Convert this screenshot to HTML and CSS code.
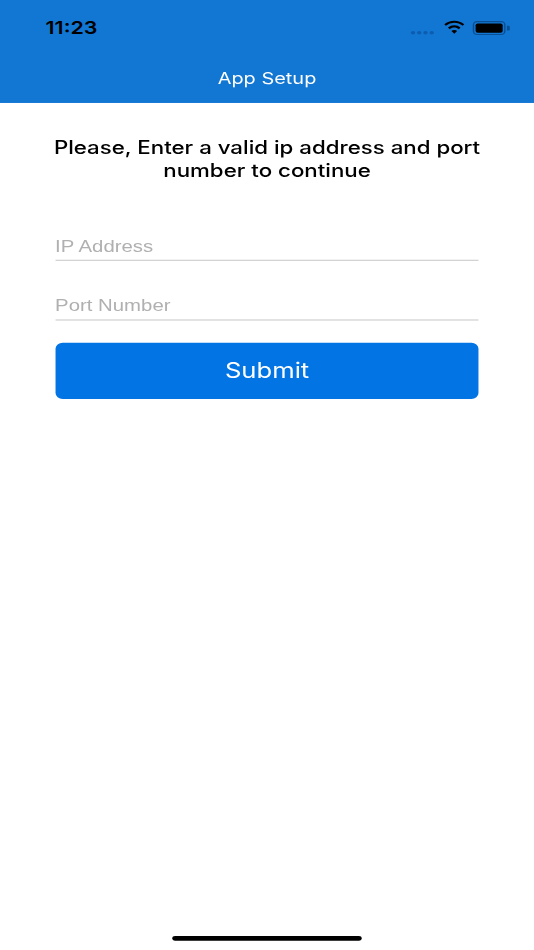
FILE: index.html
```html
<!DOCTYPE html>
<html lang="en">
<head>
<meta charset="utf-8">
<title>App Setup</title>
<link rel="stylesheet" href="styles.css">
</head>
<body>
<div class="screen">
  <header class="navbar">
    <div class="status">
      <span class="time">11:23</span>
      <div class="indicators">
        <svg class="signal" viewBox="0 0 17 4" aria-hidden="true"><g fill="#0d5cad"><circle cx="2" cy="2" r="1.5"/><circle cx="6.4" cy="2" r="1.5"/><circle cx="10.8" cy="2" r="1.5"/><circle cx="15.2" cy="2" r="1.5"/></g></svg>
        <svg class="wifi" viewBox="0 0 16 12" preserveAspectRatio="none" aria-hidden="true"><path fill="#000" d="M8 2.3c2.2 0 4.3.9 5.9 2.4l1.1-1.2A10 10 0 0 0 8 .6 10 10 0 0 0 1 3.5l1.1 1.2A8.500 8.500 0 0 1 8 2.300zM8 6c1.200 0 2.300.5 3.200 1.300l1.200-1.200A6.400 6.400 0 0 0 8 4.300a6.400 6.400 0 0 0-4.400 1.800l1.200 1.200C5.700 6.500 6.800 6 8 6zM8 7.900c-.8 0-1.500.3-2 .8L8 11l2-2.300c-.5-.5-1.200-.8-2-.8z"/></svg>
        <div class="battery"><div class="battery-fill"></div></div>
        <div class="battery-cap"></div>
      </div>
    </div>
    <div class="title-bar"><span class="title">App Setup</span></div>
  </header>
  <main class="content">
    <h1 class="prompt">Please, Enter a valid ip address and port number to continue</h1>
    <form class="form">
      <div class="field first"><span class="placeholder">IP Address</span></div>
      <div class="field"><span class="placeholder">Port Number</span></div>
      <div class="submit">Submit</div>
    </form>
  </main>
  <div class="home-indicator"></div>
</div>
</body>
</html>
```
FILE: styles.css
```css
* { box-sizing: border-box; }
html, body { margin: 0; padding: 0; width: 534px; height: 950px; overflow: hidden; background: #fff; }
.screen {
  width: 375px; height: 812px;
  transform: scale(1.424, 1.17); transform-origin: 0 0;
  display: flex; flex-direction: column;
  font-family: "Inter", "Liberation Sans", sans-serif;
  color: #000;
}
.navbar { height: 88px; background: #1276d3; flex: none; display: flex; flex-direction: column; }
.status { height: 44px; display: flex; align-items: center; justify-content: space-between; padding: 3px 17.5px 0 32px; }
.time { font-size: 15px; font-weight: 600; line-height: 18px; }
.indicators { display: flex; align-items: center; }
.signal { width: 17px; height: 4px; margin-top: 8px; margin-right: 6px; }
.wifi { width: 16px; height: 13px; margin-right: 5.5px; }
.battery { width: 23px; height: 12px; border: 1px solid #0a4f94; border-radius: 3px; padding: 1px; }
.battery-fill { width: 100%; height: 100%; background: #000; border-radius: 1.5px; }
.battery-cap { width: 1.500px; height: 4px; background: #0a4f94; margin-left: 1px; border-radius: 0 1px 1px 0; }
.title-bar { height: 44px; display: flex; align-items: center; justify-content: center; padding-top: 2px; }
.title { color: #fff; font-size: 14px; line-height: 18px; }
.content { flex: 1; padding: 28.9px 38.6px 0 38.7px; }
.prompt { margin: 0 -5px; font-size: 15.65px; line-height: 19.500px; font-weight: 500; text-align: center; }
.form { display: flex; flex-direction: column; }
.field { height: 31px; margin-top: 20px; border-bottom: 1px solid #cfcfcf; display: flex; align-items: center; padding-top: 6px; }
.field.first { margin-top: 35.7px; }
.placeholder { color: #b0b0b2; font-family: "Liberation Sans", sans-serif; font-size: 14.3px; }
.submit { margin-top: 19px; height: 48px; border-radius: 5px; background: #0274e4; color: #fff; font-size: 18px; display: flex; align-items: center; justify-content: center; }
.home-indicator { position: absolute; left: 120.500px; bottom: 8px; width: 133.500px; height: 4px; background: #000; border-radius: 2px; }
```
